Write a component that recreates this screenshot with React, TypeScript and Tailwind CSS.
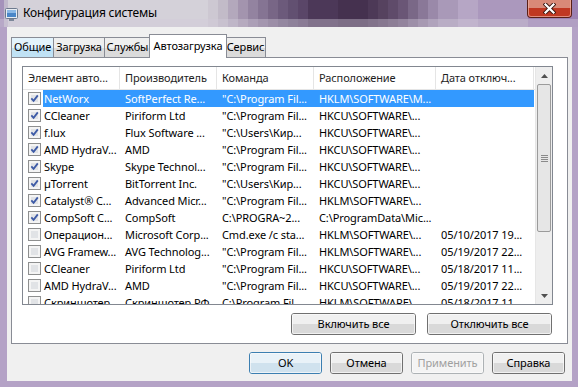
import React from "react";

type Row = {
  checked: boolean;
  name: string;
  maker: string;
  cmd: string;
  loc: string;
  date: string;
  selected?: boolean;
};

const rows: Row[] = [
  { checked: true, name: "NetWorx", maker: "SoftPerfect Re...", cmd: "\"C:\\Program Fil...", loc: "HKLM\\SOFTWARE\\M...", date: "", selected: true },
  { checked: true, name: "CCleaner", maker: "Piriform Ltd", cmd: "\"C:\\Program Fil...", loc: "HKCU\\SOFTWARE\\...", date: "" },
  { checked: true, name: "f.lux", maker: "Flux Software ...", cmd: "\"C:\\Users\\Кир...", loc: "HKCU\\SOFTWARE\\...", date: "" },
  { checked: true, name: "AMD HydraV...", maker: "AMD", cmd: "\"C:\\Program Fil...", loc: "HKCU\\SOFTWARE\\...", date: "" },
  { checked: true, name: "Skype", maker: "Skype Technol...", cmd: "\"C:\\Program Fil...", loc: "HKCU\\SOFTWARE\\...", date: "" },
  { checked: true, name: "µTorrent", maker: "BitTorrent Inc.", cmd: "\"C:\\Users\\Кир...", loc: "HKCU\\SOFTWARE\\...", date: "" },
  { checked: true, name: "Catalyst® C...", maker: "Advanced Micr...", cmd: "\"C:\\Program Fil...", loc: "HKLM\\SOFTWARE\\...", date: "" },
  { checked: true, name: "CompSoft C...", maker: "CompSoft", cmd: "C:\\PROGRA~2...", loc: "C:\\ProgramData\\Mic...", date: "" },
  { checked: false, name: "Операцион...", maker: "Microsoft Corp...", cmd: "Cmd.exe /c sta...", loc: "HKLM\\SOFTWARE\\...", date: "05/10/2017 19..." },
  { checked: false, name: "AVG Framew...", maker: "AVG Technolog...", cmd: "\"C:\\Program Fil...", loc: "HKLM\\SOFTWARE\\...", date: "05/19/2017 22..." },
  { checked: false, name: "CCleaner", maker: "Piriform Ltd", cmd: "\"C:\\Program Fil...", loc: "HKCU\\SOFTWARE\\...", date: "05/18/2017 11..." },
  { checked: false, name: "AMD HydraV...", maker: "AMD", cmd: "\"C:\\Program Fil...", loc: "HKCU\\SOFTWARE\\...", date: "05/19/2017 22..." },
  { checked: false, name: "Скриншотер...", maker: "Скриншотер.РФ", cmd: "C:\\Program Fil...", loc: "HKLM\\SOFTWARE\\...", date: "05/18/2017 11..." },
];

// Aero glass backdrop strips (full class names written out)
const glassStrips: string[] = [
  "w-[4px] bg-[#a592bb]",
  "w-[4px] bg-[#c0b8cb]",
  "w-[200px] bg-[#d4d1d9]",
  "w-[10px] bg-[#cdc8d2]",
  "w-[10px] bg-[#c2bbc8]",
  "w-[10px] bg-[#b3a8bc]",
  "w-[10px] bg-[#a394ae]",
  "w-[10px] bg-[#9383a0]",
  "w-[10px] bg-[#857493]",
  "w-[10px] bg-[#786686]",
  "w-[10px] bg-[#6c5a7b]",
  "w-[10px] bg-[#625071]",
  "w-[10px] bg-[#5a4668]",
  "w-[30px] bg-[#4c3858]",
  "w-[30px] bg-[#45314f]",
  "w-[10px] bg-[#4d3957]",
  "w-[10px] bg-[#56425f]",
  "w-[10px] bg-[#5f4b6a]",
  "w-[10px] bg-[#6a5676]",
  "w-[10px] bg-[#7a6887]",
  "w-[10px] bg-[#8a7898]",
  "w-[10px] bg-[#9a89a9]",
  "w-[20px] bg-[#a999b8]",
  "w-[20px] bg-[#b6a6c5]",
  "w-[50px] bg-[#ab98bd]",
  "flex-1 bg-[#9c82b4]",
];

function CheckBox({ checked }: { checked: boolean }) {
  return (
    <div className="w-[13px] h-[13px] shrink-0 border border-[#8e8f8f] bg-[#f4f4f4] p-[2px]">
      <div className="w-full h-full relative bg-[#e1e3e6]">
        {checked && (
          <svg width="11" height="11" viewBox="0 0 11 11" className="absolute left-[-2px] top-[-2px]">
            <path d="M2.3 5.4 L4.6 7.9 L8.8 2.4" stroke="#3d5aa6" strokeWidth="1.8" fill="none" />
          </svg>
        )}
      </div>
    </div>
  );
}

const cellBase = "h-full flex items-center whitespace-nowrap overflow-hidden pl-[5px]";

function ListRow({ r }: { r: Row }) {
  const sel = r.selected;
  const bg = sel ? "bg-[#3399ff] text-white" : "";
  return (
    <div className="flex h-[17px] shrink-0 leading-[17px]">
      <div className="w-[97px] h-full flex items-center">
        <div className="pl-[5px] pr-[2px] flex items-center">
          <CheckBox checked={r.checked} />
        </div>
        <div className={`flex-1 h-full flex items-center pl-[1px] whitespace-nowrap overflow-hidden ${bg}`}>{r.name}</div>
      </div>
      <div className={`w-[97px] ${cellBase} ${bg}`}>{r.maker}</div>
      <div className={`w-[97px] ${cellBase} ${bg}`}>{r.cmd}</div>
      <div className={`w-[122px] ${cellBase} ${bg}`}>{r.loc}</div>
      <div className={`w-[98px] ${cellBase} ${bg}`}>{r.date}</div>
    </div>
  );
}

function HeaderCell({ w, children }: { w: string; children: React.ReactNode }) {
  return (
    <div className={`${w} h-full flex items-center pl-[5px] pt-[1px] border-r border-[#e5e5e5] whitespace-nowrap overflow-hidden text-[#1e1e1e]`}>
      {children}
    </div>
  );
}

function Btn({ children, w, variant }: { children: React.ReactNode; w: string; variant?: "default" | "disabled" }) {
  let top = "bg-[#f0f0f0]";
  let bottom = "bg-[#d9d9d9]";
  let border = "border-[#707070] text-black";
  if (variant === "default") {
    top = "bg-[#e9f2f8]";
    bottom = "bg-[#d0e2ee]";
    border = "border-[#3c7fb1] text-black";
  }
  if (variant === "disabled") {
    top = "bg-[#f4f4f4]";
    bottom = "bg-[#f4f4f4]";
    border = "border-[#adb2b5] text-[#a0a0a0]";
  }
  return (
    <div className={`${w} h-[22px] rounded-[3px] border ${border} overflow-hidden grid`}>
      <div className="col-start-1 row-start-1 flex flex-col">
        <div className={`h-1/2 ${top}`} />
        <div className={`h-1/2 ${bottom}`} />
      </div>
      <div className="col-start-1 row-start-1 flex items-center justify-center rounded-[2px] border border-[#fbfbfb]/70">
        {children}
      </div>
    </div>
  );
}

function Tab({ children, w, kind }: { children: React.ReactNode; w: string; kind: "normal" | "hover" | "selected" }) {
  if (kind === "selected")
    return (
      <div className={`${w} h-[24px] -mb-px -ml-[2px] -mr-[1px] relative z-10 bg-white border border-b-0 border-[#898c95] flex items-start justify-center pt-[3px]`}>
        {children}
      </div>
    );
  const top = kind === "hover" ? "bg-[#e3f3fc]" : "bg-[#efefef]";
  const bottom = kind === "hover" ? "bg-[#c0e2f5]" : "bg-[#dbdbdb]";
  return (
    <div className={`${w} h-[20px] -ml-px first:ml-0 border border-b-0 border-[#898c95] grid`}>
      <div className="col-start-1 row-start-1 flex flex-col">
        <div className={`h-1/2 ${top}`} />
        <div className={`h-1/2 ${bottom}`} />
      </div>
      <div className="col-start-1 row-start-1 flex items-center justify-center">{children}</div>
    </div>
  );
}

export default function App() {
  return (
    <div className="w-[578px] h-[387px] overflow-hidden flex flex-col bg-[#b4a2c6] font-['Noto_Sans',sans-serif] text-[11px] tracking-[-0.1px] text-black">
      {/* Title bar: glass backdrop and content stacked in one grid cell */}
      <div className="h-[27px] shrink-0 grid">
        <div className="col-start-1 row-start-1 flex">
          {glassStrips.map((c, i) => (
            <div key={i} className={c} />
          ))}
        </div>
        <div className="col-start-1 row-start-1 flex flex-col">
          <div className="h-[19px]" />
          <div className="flex-1 bg-[#d2cada]/40" />
        </div>
        <div className="col-start-1 row-start-1 relative flex items-center pl-[5px]">
          <svg width="13" height="13" viewBox="0 0 13 13" className="shrink-0 mt-[1px]">
            <rect x="0.5" y="0.5" width="12" height="10" rx="1" fill="#e8ecf2" stroke="#6d7a8e" />
            <rect x="2" y="2" width="9" height="7" fill="#4a86c8" />
            <rect x="2" y="2" width="9" height="3" fill="#8bb8e6" />
            <rect x="4" y="11" width="5" height="2" fill="#7c8799" />
          </svg>
          <span className="ml-[5px] pb-[1px] text-[12px] tracking-[-0.2px] text-black">Конфигурация системы</span>
          <div className="absolute right-[6px] top-0 w-[45px] h-[18px] rounded-b-[4px] border border-t-0 border-[#5a1f16] overflow-hidden grid">
            <div className="col-start-1 row-start-1 flex flex-col">
              <div className="h-[8px] bg-[#d98a78]" />
              <div className="flex-1 bg-[#c03822]" />
            </div>
            <div className="col-start-1 row-start-1 flex items-center justify-center border border-t-0 border-[#eeb3a5]/70 rounded-b-[3px]">
              <svg width="13" height="11" viewBox="0 0 13 11">
                <path d="M2.5 1.5 L10.5 9.5 M10.5 1.5 L2.5 9.5" stroke="#3a1610" strokeWidth="4" strokeLinecap="square" />
                <path d="M2.5 1.5 L10.5 9.5 M10.5 1.5 L2.5 9.5" stroke="#ffffff" strokeWidth="2.2" strokeLinecap="square" />
              </svg>
            </div>
          </div>
        </div>
      </div>

      {/* Client area */}
      <div className="ml-[7px] mr-[6px] h-[354px] shrink-0 bg-[#f0f0f0] flex flex-col px-[4px] pt-[7px]">
        {/* Tabs */}
        <div className="h-[23px] flex items-end relative z-10">
          <Tab w="w-[43px]" kind="hover">Общие</Tab>
          <Tab w="w-[52px]" kind="normal">Загрузка</Tab>
          <Tab w="w-[47px]" kind="normal">Службы</Tab>
          <Tab w="w-[78px]" kind="selected">Автозагрузка</Tab>
          <Tab w="w-[41px]" kind="normal">Сервис</Tab>
        </div>

        {/* Panel */}
        <div className="h-[287px] border border-[#898c95] bg-white pl-[10px] pt-[8px] flex flex-col">
          <div className="w-[531px] h-[239px] border border-[#828790] flex overflow-hidden">
            <div className="w-[512px] flex flex-col">
              <div className="h-[23px] shrink-0 flex border-b border-[#e5e5e5] bg-white">
                <HeaderCell w="w-[97px]">Элемент авто...</HeaderCell>
                <HeaderCell w="w-[97px]">Производитель</HeaderCell>
                <HeaderCell w="w-[97px]">Команда</HeaderCell>
                <HeaderCell w="w-[122px]">Расположение</HeaderCell>
                <HeaderCell w="w-[98px]">Дата отключ...</HeaderCell>
              </div>
              {rows.map((r, i) => (
                <ListRow key={i} r={r} />
              ))}
            </div>
            {/* Scrollbar */}
            <div className="w-[17px] h-full flex flex-col bg-[#eeeeee] border-l border-[#e6e6e6]">
              <div className="h-[17px] shrink-0 flex items-center justify-center">
                <svg width="7" height="4" viewBox="0 0 7 4">
                  <path d="M0 4 L3.5 0 L7 4 Z" fill="#505050" />
                </svg>
              </div>
              <div className="h-[148px] shrink-0 mx-[1px] rounded-[2px] border border-[#9b9b9b] bg-[#e6e6e6] flex items-center justify-center">
                <div className="flex flex-col gap-[1px]">
                  <div className="w-[7px] h-[1px] bg-[#8a8a8a]" />
                  <div className="w-[7px] h-[1px] bg-[#8a8a8a]" />
                  <div className="w-[7px] h-[1px] bg-[#8a8a8a]" />
                  <div className="w-[7px] h-[1px] bg-[#8a8a8a]" />
                </div>
              </div>
              <div className="flex-1" />
              <div className="h-[17px] shrink-0 flex items-center justify-center">
                <svg width="7" height="4" viewBox="0 0 7 4">
                  <path d="M0 0 L3.5 4 L7 0 Z" fill="#505050" />
                </svg>
              </div>
            </div>
          </div>
          <div className="w-[531px] mt-[8px] flex justify-end gap-[11px] pr-[1px]">
            <Btn w="w-[125px]">Включить все</Btn>
            <Btn w="w-[125px]">Отключить все</Btn>
          </div>
        </div>

        {/* Bottom buttons */}
        <div className="mt-[8px] flex justify-end gap-[8px] pr-[3px]">
          <Btn w="w-[73px]" variant="default">OK</Btn>
          <Btn w="w-[73px]">Отмена</Btn>
          <Btn w="w-[73px]" variant="disabled">Применить</Btn>
          <Btn w="w-[73px]">Справка</Btn>
        </div>
      </div>
    </div>
  );
}
